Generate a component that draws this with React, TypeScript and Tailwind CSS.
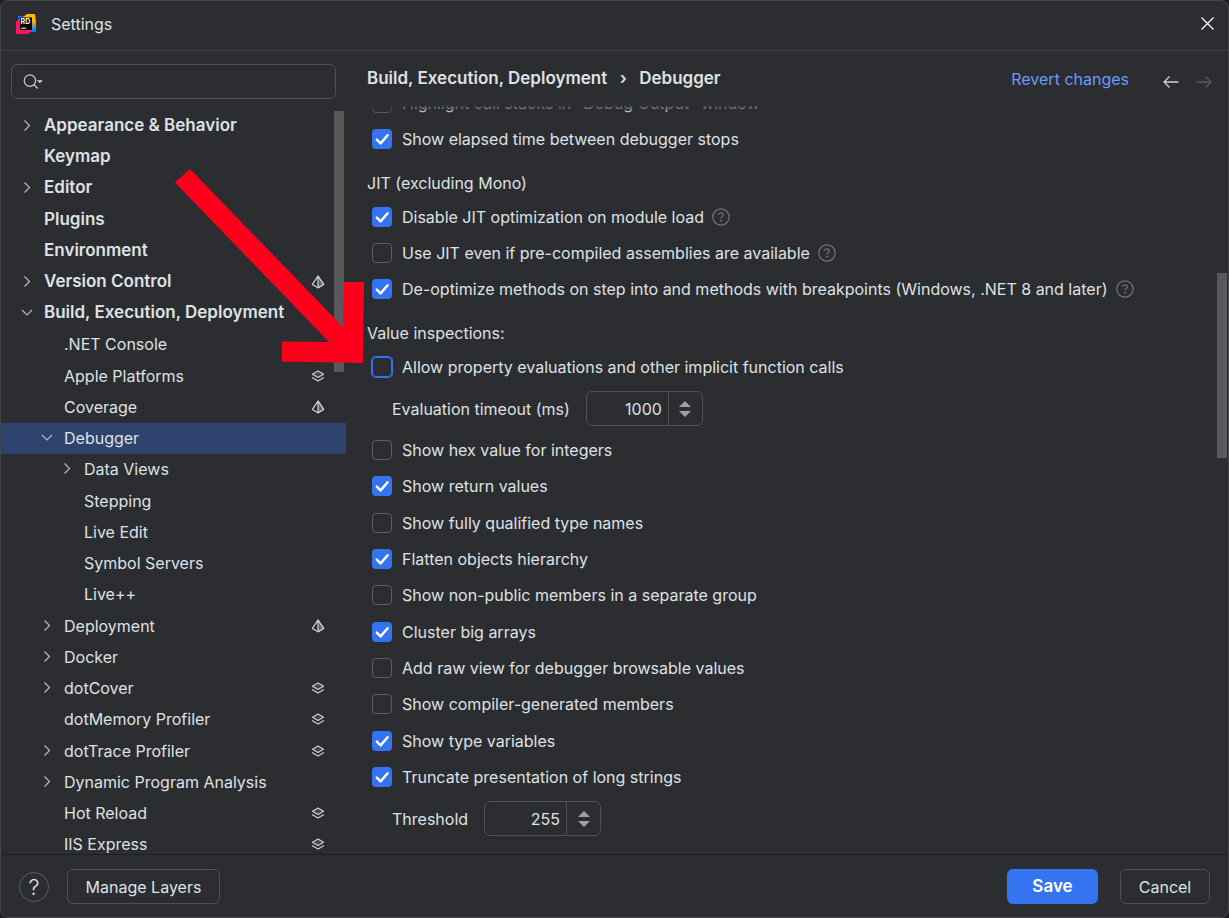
import { useState } from "react";

type Mark = "project" | "layers";

type TreeNode = {
  name: string;
  level: number;
  open?: boolean;
  bold?: boolean;
  mark?: Mark;
};

const tree: TreeNode[] = [
  { name: "Appearance & Behavior", level: 0, open: false, bold: true },
  { name: "Keymap", level: 0, bold: true },
  { name: "Editor", level: 0, open: false, bold: true },
  { name: "Plugins", level: 0, bold: true },
  { name: "Environment", level: 0, bold: true },
  { name: "Version Control", level: 0, open: false, bold: true, mark: "project" },
  { name: "Build, Execution, Deployment", level: 0, open: true, bold: true },
  { name: ".NET Console", level: 1 },
  { name: "Apple Platforms", level: 1, mark: "layers" },
  { name: "Coverage", level: 1, mark: "project" },
  { name: "Debugger", level: 1, open: true },
  { name: "Data Views", level: 2, open: false },
  { name: "Stepping", level: 2 },
  { name: "Live Edit", level: 2 },
  { name: "Symbol Servers", level: 2 },
  { name: "Live++", level: 2 },
  { name: "Deployment", level: 1, open: false, mark: "project" },
  { name: "Docker", level: 1, open: false },
  { name: "dotCover", level: 1, open: false, mark: "layers" },
  { name: "dotMemory Profiler", level: 1, mark: "layers" },
  { name: "dotTrace Profiler", level: 1, open: false, mark: "layers" },
  { name: "Dynamic Program Analysis", level: 1, open: false },
  { name: "Hot Reload", level: 1, mark: "layers" },
  { name: "IIS Express", level: 1, mark: "layers" },
];

const indents = ["pl-[18px]", "pl-[38px]", "pl-[58px]"];

const inspections = [
  { label: "Show hex value for integers", on: false },
  { label: "Show return values", on: true },
  { label: "Show fully qualified type names", on: false },
  { label: "Flatten objects hierarchy", on: true },
  { label: "Show non-public members in a separate group", on: false },
  { label: "Cluster big arrays", on: true },
  { label: "Add raw view for debugger browsable values", on: false },
  { label: "Show compiler-generated members", on: false },
  { label: "Show type variables", on: true },
  { label: "Truncate presentation of long strings", on: true },
];

function RiderLogo() {
  return (
    <svg width="20" height="20" viewBox="0 0 20 20" aria-hidden="true">
      <defs>
        <linearGradient id="warm" x1="0" y1="0" x2="0" y2="1">
          <stop offset="0.4" stopColor="#ffb800" />
          <stop offset="0.9" stopColor="#087cfa" />
        </linearGradient>
      </defs>
      <path d="M2 2h9l5 14-12-1z" fill="#087cfa" />
      <path d="M8.5 2 11 0h7.5l.7 1 .8 8v9h-6l-9-12z" fill="url(#warm)" />
      <path d="M0 7.5 3 5h3l10 11-3.5 4H1l-1-1z" fill="#ff1464" />
      <path d="M4 3.5h12v12.5H4z" fill="#000" />
      <path d="M5.2 14.2h5" stroke="#fff" strokeWidth="1" />
      <text x="4.6" y="10" fill="#fff" fontSize="7" fontWeight="700" fontFamily="Inter, sans-serif">
        RD
      </text>
    </svg>
  );
}

function Chevron({ open }: { open: boolean }) {
  return (
    <svg width="16" height="16" viewBox="0 0 16 16" fill="none" stroke="#b4b8bf" strokeWidth="1.2" aria-hidden="true">
      <path d={open ? "M3 5 8 10 13 5" : "M5.5 2.5 10.5 7.5 5.5 12.5"} />
    </svg>
  );
}

function MarkIcon({ mark }: { mark: Mark }) {
  if (mark === "project") {
    return (
      <svg width="14" height="14" viewBox="0 0 14 14" fill="none" stroke="#ced0d6" strokeWidth="1.2" strokeLinejoin="round" aria-hidden="true">
        <path d="M7 1.2 12.6 9.4 7 12.8 1.4 9.4z" />
        <path d="M7 1.2 12.6 9.4 7 12.8z" fill="#5f6166" />
      </svg>
    );
  }
  return (
    <svg width="14" height="14" viewBox="0 0 14 14" fill="none" stroke="#ced0d6" strokeWidth="1.2" strokeLinejoin="round" aria-hidden="true">
      <path d="M7 2 12.5 5.2 7 8.4 1.5 5.2z" fill="#43454a" />
      <path d="M1 8.5 7 12l6-3.5" />
    </svg>
  );
}

function HelpIcon() {
  return (
    <svg className="ml-2" width="18" height="18" viewBox="0 0 18 18" fill="none" stroke="#6f737a" strokeWidth="1.2" aria-hidden="true">
      <circle cx="9" cy="9" r="8.2" />
      <path d="M6.7 7.1c0-1.4 1-2.3 2.3-2.3s2.3.9 2.3 2.1c0 1.7-2.3 1.7-2.3 3.6" />
      <circle cx="9" cy="12.7" r="0.4" fill="#6f737a" />
    </svg>
  );
}

function CheckRow({ label, on, help, focused }: { label: string; on: boolean; help?: boolean; focused?: boolean }) {
  const [checked, setChecked] = useState(on);

  return (
    <div className="flex min-h-9 flex-1 items-center pl-[5px]">
      <label className="flex items-center gap-2.5 whitespace-nowrap">
        <span className="grid size-5 place-items-center">
          <input
            type="checkbox"
            checked={checked}
            onChange={(e) => setChecked(e.target.checked)}
            className={`col-start-1 row-start-1 size-5 appearance-none ${
              checked ? "rounded bg-[#3574f0]" : "rounded border border-[#5a5d63]"
            } ${focused ? "border-[#3574f0] ring-1 ring-[#3574f0]" : ""}`}
          />
          {checked && (
            <svg className="pointer-events-none col-start-1 row-start-1" width="20" height="20" viewBox="0 0 20 20" fill="none" stroke="#fff" strokeWidth="2.4" strokeLinecap="round" strokeLinejoin="round" aria-hidden="true">
              <path d="M4.8 10.6 8.6 14.4 15.6 6.2" />
            </svg>
          )}
        </span>
        {label}
      </label>
      {help && <HelpIcon />}
    </div>
  );
}

function Spinner({ id, label, initial }: { id: string; label: string; initial: number }) {
  const [value, setValue] = useState(initial);

  return (
    <div className="flex h-[47px] items-center gap-4 pl-[25px]">
      <label htmlFor={id}>{label}</label>
      <div className="flex h-[35px] w-[117px] rounded-md border border-[#4e5157]">
        <input
          id={id}
          type="text"
          value={value}
          onChange={(e) => setValue(Number(e.target.value) || 0)}
          className="w-0 flex-1 bg-transparent pr-1.5 text-right outline-none"
        />
        <div className="flex w-[34px] flex-col items-center justify-center gap-1 border-l border-[#4e5157]">
          <button aria-label={`Increase ${label}`} onClick={() => setValue(value + 1)}>
            <svg className="block" width="12" height="6" viewBox="0 0 12 6" fill="#9da0a8" aria-hidden="true">
              <path d="M6 0 12 6H0z" />
            </svg>
          </button>
          <button aria-label={`Decrease ${label}`} onClick={() => setValue(value - 1)}>
            <svg className="block" width="12" height="6" viewBox="0 0 12 6" fill="#9da0a8" aria-hidden="true">
              <path d="M0 0h12L6 6z" />
            </svg>
          </button>
        </div>
      </div>
    </div>
  );
}

function SectionTitle({ children }: { children: string }) {
  return <h2 className="flex h-[42px] items-center pt-2.5">{children}</h2>;
}

function Sidebar() {
  const [selected, setSelected] = useState("Debugger");

  return (
    <aside className="relative flex w-[345px] shrink-0 flex-col overflow-hidden">
      <div className="mt-[13px] mr-2.5 ml-2.5 flex h-[35px] shrink-0 items-center rounded-md border border-[#4e5157] pl-[11px]">
        <svg width="22" height="18" viewBox="0 0 22 18" fill="none" stroke="#ced0d6" strokeWidth="1.3" aria-hidden="true">
          <circle cx="7.5" cy="7.5" r="6.2" />
          <path d="m12 12 4 4" />
          <path d="M15 7h6.5l-3.2 3.4z" fill="#ced0d6" stroke="none" />
        </svg>
        <input type="text" aria-label="Search settings" className="ml-1 w-full bg-transparent outline-none" />
      </div>
      <ul className="mt-[11px] flex h-[750px] shrink-0 flex-col">
        {tree.map((node) => (
          <li key={node.name} className="flex flex-1">
            <button
              onClick={() => setSelected(node.name)}
              className={`flex w-full items-center pr-[21px] text-left whitespace-nowrap ${indents[node.level]} ${
                node.bold ? "text-[17px] font-semibold" : ""
              } ${selected === node.name ? "bg-[#2e436e]" : ""}`}
            >
              <span className="mr-[9px] w-4 shrink-0">
                {node.open !== undefined && <Chevron open={node.open} />}
              </span>
              <span className="flex-1">{node.name}</span>
              {node.mark && <MarkIcon mark={node.mark} />}
            </button>
          </li>
        ))}
      </ul>
      <div className="absolute top-[60px] right-0.5 h-[261px] w-2.5 bg-[#58595b]" />
    </aside>
  );
}

export default function App() {
  return (
    <div className="h-screen bg-[#1e1f22] font-[Inter,'Liberation_Sans',sans-serif] text-base text-[#dfe1e5]">
      <div className="relative flex h-full flex-col overflow-hidden rounded-lg border border-[#43454a] bg-[#2b2d30]">
        <header className="flex h-[50px] shrink-0 items-center border-b border-[#3c3e42] pr-3.5 pb-1 pl-[15px]">
          <RiderLogo />
          <h1 className="ml-[15px] flex-1">Settings</h1>
          <button aria-label="Close">
            <svg width="13" height="13" viewBox="0 0 13 13" stroke="#fff" strokeWidth="1.2" aria-hidden="true">
              <path d="m0.5 0.5 12 12M12.5 0.5l-12 12" />
            </svg>
          </button>
        </header>

        <div className="flex min-h-0 flex-1">
          <Sidebar />

          <main className="relative flex min-w-0 flex-1 flex-col pl-[21px]">
            <div className="flex h-[54px] shrink-0 items-center pt-0.5 pr-4">
              <nav className="flex flex-1 items-center text-[17px] font-semibold">
                <span>Build, Execution, Deployment</span>
                <span className="w-8 text-center">›</span>
                <span>Debugger</span>
              </nav>
              <a href="#revert" className="text-[#6b9bfa]">
                Revert changes
              </a>
              <div className="ml-[34px] flex gap-[17px] pt-1.5">
                <button aria-label="Back">
                  <svg width="16" height="14" viewBox="0 0 16 14" fill="none" stroke="#ced0d6" strokeWidth="1.3" aria-hidden="true">
                    <path d="M15.5 7H1.2M6.5 1.5 1 7l5.5 5.5" />
                  </svg>
                </button>
                <button aria-label="Forward" disabled>
                  <svg width="16" height="14" viewBox="0 0 16 14" fill="none" stroke="#5a5d63" strokeWidth="1.3" aria-hidden="true">
                    <path d="M.5 7h14.3M9.5 1.5 15 7l-5.5 5.5" />
                  </svg>
                </button>
              </div>
            </div>

            <div className="relative min-h-0 flex-1 overflow-hidden">
              <div className="-mt-5 flex flex-col">
                <CheckRow label={'Highlight call stacks in "Debug Output" window'} on={false} />
                <CheckRow label="Show elapsed time between debugger stops" on />
              </div>
              <SectionTitle>JIT (excluding Mono)</SectionTitle>
              <CheckRow label="Disable JIT optimization on module load" on help />
              <CheckRow label="Use JIT even if pre-compiled assemblies are available" on={false} help />
              <CheckRow label="De-optimize methods on step into and methods with breakpoints (Windows, .NET 8 and later)" on help />
              <SectionTitle>Value inspections:</SectionTitle>
              <CheckRow label="Allow property evaluations and other implicit function calls" on={false} focused />
              <Spinner id="timeout" label="Evaluation timeout (ms)" initial={1000} />
              <div className="flex h-[363px] flex-col">
                {inspections.map((item) => (
                  <CheckRow key={item.label} label={item.label} on={item.on} />
                ))}
              </div>
              <Spinner id="threshold" label="Threshold" initial={255} />
              <div className="absolute inset-x-0 top-0 h-2 bg-linear-to-b from-[#2b2d30] to-transparent" />
            </div>
            <div className="absolute top-[222px] right-px h-[185px] w-2.5 bg-[#58595b]" />
          </main>
        </div>

        <footer className="flex h-[63px] shrink-0 items-center border-t border-[#1e1f22] pt-px pr-[18px] pl-[18px]">
          <button aria-label="Help" className="flex size-[30px] items-center justify-center rounded-full border border-[#5a5d63] text-[22px] leading-none font-light">
            ?
          </button>
          <button className="ml-[18px] h-[35px] w-[153px] rounded-md border border-[#4e5157]">Manage Layers</button>
          <div className="flex-1" />
          <button className="h-[35px] w-[91px] rounded-md bg-[#3574f0] text-[17px] font-semibold text-white">Save</button>
          <button className="ml-[22px] h-[35px] w-[90px] rounded-md border border-[#4e5157]">Cancel</button>
        </footer>

        <svg className="pointer-events-none absolute top-0 left-0" width="370" height="370" viewBox="1 1 370 370" aria-hidden="true">
          <path d="M175 182.5 190 169 343 327 344 282H364L363 363 282 361.5V341.5L329 342z" fill="#ff001c" />
        </svg>
      </div>
    </div>
  );
}
